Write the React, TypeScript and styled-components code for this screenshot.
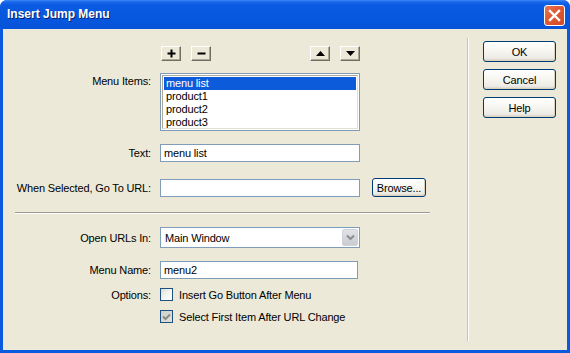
import styled, { createGlobalStyle } from 'styled-components';

const GlobalStyle = createGlobalStyle`
    html, body {
        margin: 0;
        padding: 0;
        background: #ffffff;
    }
    body {
        font-family: "Liberation Sans", Arial, sans-serif;
        font-size: 11px;
        letter-spacing: -0.15px;
        color: #000000;
    }
`

const menuItems = ['menu list', 'product1', 'product2', 'product3'];

function App() {
    return (
        <>
            <GlobalStyle />
            <StyledWindow>
                <StyledTitleBar>
                    <StyledTitle>Insert Jump Menu</StyledTitle>
                    <StyledClose aria-label="Close">
                        <svg width="13" height="13" viewBox="0 0 13 13">
                            <path d="M2 2 L11 11 M11 2 L2 11" stroke="#ffffff" strokeWidth="2.4" strokeLinecap="square" />
                        </svg>
                    </StyledClose>
                </StyledTitleBar>

                <StyledBody>
                    <StyledMain>
                        <StyledToolbar>
                            <StyledToolGroup>
                                <StyledToolBtn aria-label="Add">
                                    <svg width="9" height="9" viewBox="0 0 9 9">
                                        <path d="M3.5 0.5h2v3h3v2h-3v3h-2v-3h-3v-2h3z" fill="#000" />
                                    </svg>
                                </StyledToolBtn>
                                <StyledToolBtn aria-label="Remove">
                                    <svg width="9" height="9" viewBox="0 0 9 9">
                                        <rect x="0.5" y="3.5" width="8" height="2" fill="#000" />
                                    </svg>
                                </StyledToolBtn>
                            </StyledToolGroup>
                            <StyledToolGroup>
                                <StyledToolBtn aria-label="Move up">
                                    <svg width="9" height="5" viewBox="0 0 9 5">
                                        <path d="M4.5 0 L9 5 L0 5 Z" fill="#000" />
                                    </svg>
                                </StyledToolBtn>
                                <StyledToolBtn aria-label="Move down">
                                    <svg width="9" height="5" viewBox="0 0 9 5">
                                        <path d="M0 0 L9 0 L4.5 5 Z" fill="#000" />
                                    </svg>
                                </StyledToolBtn>
                            </StyledToolGroup>
                        </StyledToolbar>

                        <StyledRow $mt={12} $top>
                            <StyledLabel $pt={2}>Menu Items:</StyledLabel>
                            <StyledListBox>
                                <StyledListInner>
                                    {menuItems.map((item, i) => (
                                        <StyledListItem key={item} $selected={i === 0}>{item}</StyledListItem>
                                    ))}
                                </StyledListInner>
                            </StyledListBox>
                        </StyledRow>

                        <StyledRow $mt={13}>
                            <StyledLabel>Text:</StyledLabel>
                            <StyledInput>menu list</StyledInput>
                        </StyledRow>

                        <StyledRow $mt={16}>
                            <StyledLabel>When Selected, Go To URL:</StyledLabel>
                            <StyledInput />
                            <StyledButton $width={54} $height={19} $ml={12}>Browse...</StyledButton>
                        </StyledRow>

                        <StyledSeparator />

                        <StyledRow $mt={13}>
                            <StyledLabel>Open URLs In:</StyledLabel>
                            <StyledSelect>
                                <span>Main Window</span>
                                <StyledSelectArrow>
                                    <svg width="9" height="7" viewBox="0 0 9 7">
                                        <path d="M1 1.5 L4.5 5 L8 1.5" stroke="#8c8c8c" strokeWidth="2" fill="none" />
                                    </svg>
                                </StyledSelectArrow>
                            </StyledSelect>
                        </StyledRow>

                        <StyledRow $mt={13}>
                            <StyledLabel>Menu Name:</StyledLabel>
                            <StyledInput $width={198}>menu2</StyledInput>
                        </StyledRow>

                        <StyledRow $mt={9}>
                            <StyledLabel>Options:</StyledLabel>
                            <StyledCheckbox />
                            <StyledCheckText>Insert Go Button After Menu</StyledCheckText>
                        </StyledRow>

                        <StyledRow $mt={9}>
                            <StyledLabel />
                            <StyledCheckbox $checked>
                                <svg width="9" height="8" viewBox="0 0 9 8">
                                    <path d="M1 3.5 L3.5 6 L8 1.5" stroke="#8a8a8a" strokeWidth="2" fill="none" />
                                </svg>
                            </StyledCheckbox>
                            <StyledCheckText>Select First Item After URL Change</StyledCheckText>
                        </StyledRow>
                    </StyledMain>

                    <StyledDivider />

                    <StyledSide>
                        <StyledButton $width={73} $height={21}>OK</StyledButton>
                        <StyledButton $width={73} $height={21}>Cancel</StyledButton>
                        <StyledButton $width={73} $height={21}>Help</StyledButton>
                    </StyledSide>
                </StyledBody>
            </StyledWindow>
        </>
    );
}

export default App;

const StyledWindow = styled.div`
    width: 570px;
    height: 353px;
    box-sizing: border-box;
    display: flex;
    flex-direction: column;
    background: #0a5adf;
    border-radius: 7px 7px 0 0;
    overflow: hidden;
`

const StyledTitleBar = styled.div`
    height: 29px;
    flex: none;
    display: flex;
    align-items: center;
    justify-content: space-between;
    padding: 0 5px 0 7px;
    background: linear-gradient(to bottom, #3d8af7 0px, #1a66ea 2px, #0a5be2 5px, #0757df 60%, #0653d8 100%);
`

const StyledTitle = styled.div`
    color: #ffffff;
    font-family: "Liberation Sans", Arial, sans-serif;
    font-weight: 700;
    font-size: 12px;
    text-shadow: 1px 1px 0 #0a1e6e;
    letter-spacing: 0;
    margin-top: -1px;
`

const StyledClose = styled.div`
    width: 21px;
    height: 21px;
    box-sizing: border-box;
    border: 1px solid #ffffff;
    border-radius: 3px;
    background: linear-gradient(135deg, #e9795a 0%, #e05a35 40%, #cf4a26 100%);
    display: flex;
    align-items: center;
    justify-content: center;
    margin-top: 2px;
`

const StyledBody = styled.div`
    flex: 1;
    margin: 0 3px 3px 3px;
    background: #ece9d8;
    display: flex;
`

const StyledMain = styled.div`
    width: 464px;
    flex: none;
    display: flex;
    flex-direction: column;
    padding-top: 17px;
    box-sizing: border-box;
`

const StyledToolbar = styled.div`
    margin-left: 158px;
    width: 199px;
    display: flex;
    justify-content: space-between;
`

const StyledToolGroup = styled.div`
    display: flex;
    gap: 10px;
`

const StyledToolBtn = styled.div`
    width: 20px;
    height: 15px;
    box-sizing: border-box;
    background: #ece9d8;
    border-top: 1px solid #ffffff;
    border-left: 1px solid #ffffff;
    border-right: 1px solid #716f64;
    border-bottom: 1px solid #716f64;
    box-shadow: inset -1px -1px 0 #aca899;
    display: flex;
    align-items: center;
    justify-content: center;
`

type RowProps = {
    $mt: number
    $top?: boolean
}

const StyledRow = styled.div<RowProps>`
    display: flex;
    align-items: ${props => props.$top ? 'flex-start' : 'center'};
    margin-top: ${props => props.$mt}px;
`

const StyledLabel = styled.div<{ $pt?: number }>`
    width: 157px;
    flex: none;
    box-sizing: border-box;
    padding-right: 9px;
    padding-top: ${props => props.$pt || 0}px;
    text-align: right;
    white-space: nowrap;
`

const StyledListBox = styled.div`
    width: 200px;
    height: 58px;
    box-sizing: border-box;
    border: 1px solid #7f9db9;
    background: #ffffff;
    padding: 1px;
`

const StyledListInner = styled.div`
    height: 100%;
    box-sizing: border-box;
    border-top: 1px solid #aca899;
    border-left: 1px solid #aca899;
    border-right: 1px solid #e3e1d6;
    border-bottom: 1px solid #e3e1d6;
    padding: 1px;
`

const StyledListItem = styled.div<{ $selected?: boolean }>`
    height: 13px;
    line-height: 13px;
    padding-left: 2px;
    background: ${props => props.$selected ? '#0b5bdb' : 'transparent'};
    color: ${props => props.$selected ? '#ffffff' : '#000000'};
`

const StyledInput = styled.div<{ $width?: number }>`
    width: ${props => props.$width || 200}px;
    height: 18px;
    box-sizing: border-box;
    border: 1px solid #7f9db9;
    background: #ffffff;
    padding: 0 3px;
    line-height: 16px;
`

type ButtonProps = {
    $width: number
    $height: number
    $ml?: number
}

const StyledButton = styled.div<ButtonProps>`
    width: ${props => props.$width}px;
    height: ${props => props.$height}px;
    margin-left: ${props => props.$ml || 0}px;
    box-sizing: border-box;
    border: 1px solid #003c74;
    border-radius: 3px;
    background: linear-gradient(to bottom, #ffffff 0%, #f6f5f0 50%, #ecebe4 85%, #d6d0c5 100%);
    box-shadow: inset -1px -1px 0 #d8d2bd;
    display: flex;
    align-items: center;
    justify-content: center;
    flex: none;
`

const StyledSeparator = styled.div`
    margin: 15px 0 0 12px;
    width: 415px;
    height: 1px;
    background: #9d9b8f;
    border-bottom: 1px solid #ffffff;
`

const StyledSelect = styled.div`
    width: 200px;
    height: 21px;
    box-sizing: border-box;
    border: 1px solid #7f9db9;
    background: #ffffff;
    display: flex;
    align-items: center;
    justify-content: space-between;
    padding: 0 1px 0 4px;
`

const StyledSelectArrow = styled.div`
    width: 16px;
    height: 17px;
    box-sizing: border-box;
    border: 1px solid #d0d3d9;
    border-radius: 2px;
    background: linear-gradient(to bottom, #e0e2e6 0%, #c9ccd2 100%);
    display: flex;
    align-items: center;
    justify-content: center;
`

const StyledCheckbox = styled.div<{ $checked?: boolean }>`
    width: 13px;
    height: 13px;
    box-sizing: border-box;
    border: 1px solid #1c5180;
    background: ${props => props.$checked
        ? 'linear-gradient(135deg, #d0cfc6 0%, #e2e1da 100%)'
        : 'linear-gradient(135deg, #dcdbd3 0%, #f4f4f0 45%, #ffffff 100%)'};
    display: flex;
    align-items: center;
    justify-content: center;
    flex: none;
`

const StyledCheckText = styled.div`
    margin-left: 6px;
    white-space: nowrap;
`

const StyledDivider = styled.div`
    width: 1px;
    margin: 9px 0 9px 0;
    background: #c5c2b2;
    border-right: 1px solid #ffffff;
`

const StyledSide = styled.div`
    display: flex;
    flex-direction: column;
    gap: 7px;
    padding: 12px 0 0 14px;
`
